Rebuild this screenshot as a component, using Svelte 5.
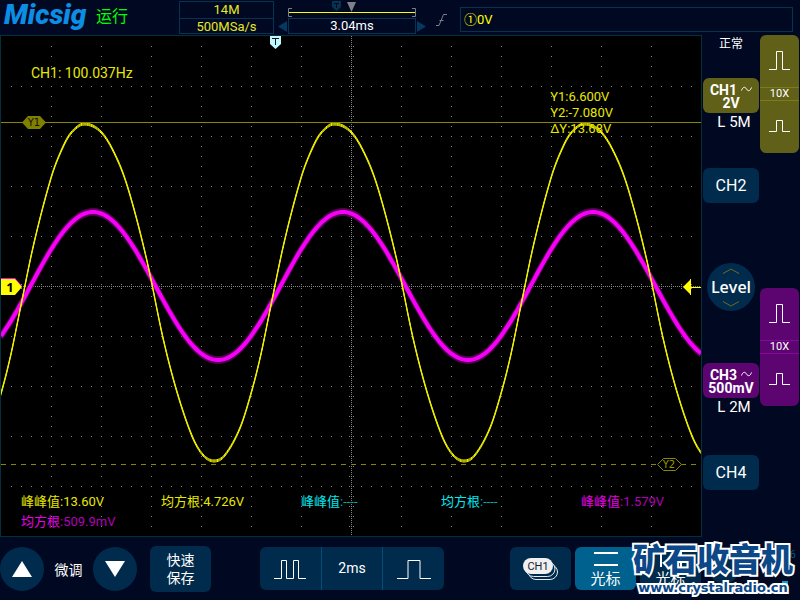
<script>
  const W = 700;
  const H = 500;
  const PERIOD = 250;

  // one period of CH1, in plot units
  const ch1Period = [
    [19, 274], [33, 207], [50, 142], [61, 113], [70, 97], [83, 88],
    [101, 97], [117, 125], [129, 159], [146, 225], [162, 302],
    [176, 356], [191, 400], [202, 419], [213, 425], [224, 419], [239, 392],
    [251, 354], [260, 318]
  ];

  const columns = Array.from({ length: 13 }, (_, i) => (i + 1) * 50 + 0.5);
  const rows = Array.from({ length: 9 }, (_, i) => (i + 1) * 50 + 0.5);

  const measurements = [
    { label: '峰峰值', value: '13.60V', source: 'ch1' },
    { label: '均方根', value: '4.726V', source: 'ch1' },
    { label: '峰峰值', value: '----', source: 'ch2' },
    { label: '均方根', value: '----', source: 'ch2' },
    { label: '峰峰值', value: '1.579V', source: 'ch3' },
    { label: '均方根', value: '509.9mV', source: 'ch3' }
  ];

  const probes = [
    { id: 'ch1', ratio: '10X' },
    { id: 'ch3', ratio: '10X' }
  ];

  function smooth(points) {
    const slope = (i) => (points[i + 1][1] - points[i - 1][1]) / (points[i + 1][0] - points[i - 1][0]);
    let d = `M${points[1]}`;
    for (let i = 1; i < points.length - 2; i++) {
      const [x1, y1] = points[i];
      const [x2, y2] = points[i + 1];
      const step = (x2 - x1) / 3;
      d += `C${x1 + step} ${y1 + step * slope(i)} ${x2 - step} ${y2 - step * slope(i + 1)} ${x2} ${y2}`;
    }
    return d;
  }

  function sine(amplitude, offset, phase) {
    let d = '';
    for (let x = 0; x <= W; x += 2) {
      const y = offset - amplitude * Math.sin((2 * Math.PI * (x - phase)) / PERIOD);
      d += `${x ? 'L' : 'M'}${x} ${y.toFixed(2)}`;
    }
    return d;
  }

  const ch1Path = smooth([-1, 0, 1, 2].flatMap((n) => ch1Period.map(([x, y]) => [x + n * PERIOD, y])));
  const ch3Path = sine(74, 250, 29.5);
</script>

<div class="scope">
  <header class="topbar">
    <div class="brand">Micsig</div>
    <div class="state">运行</div>
    <div class="sampling">
      <div>14M</div>
      <div>500MSa/s</div>
    </div>
    <div class="position">
      <svg class="memory" viewBox="0 0 128 17" aria-hidden="true">
        <path d="M44 0h9v6l-4.500 4L44 6z" fill="#043450" />
        <path d="M46 2.500h5M48.500 2v5" stroke="#000822" fill="none" />
        <path d="M59 1h9l-4.500 10z" fill="#808088" />
        <path d="M1 11.500h126" stroke="#ff0" />
        <path d="M4 7.500H.5v8H4M124 7.500h3.500v8H124" stroke="#777f88" fill="none" />
      </svg>
      <div class="time">
        <button aria-label="earlier"><svg viewBox="0 0 9 11"><path d="M9 0v11L0 5.500z" /></svg></button>
        <span>3.04ms</span>
        <button aria-label="later"><svg viewBox="0 0 9 11"><path d="M0 0v11l9-5.500z" /></svg></button>
      </div>
    </div>
    <svg class="slope" viewBox="0 0 11 14" aria-hidden="true">
      <path d="M0 12.500h3L7.500 1.500H11M3.500 7.500h4" />
    </svg>
    <div class="trigger">①0V</div>
  </header>

  <div class="middle">
    <main class="plot">
      <svg viewBox="0 0 {W} {H}">
        <g class="grid">
          {#each columns as x}
            <path d="M{x} 10V{H}" stroke-dasharray="1 9" />
          {/each}
          {#each rows as y}
            <path d="M10 {y}H{W}" stroke-dasharray="1 9" />
          {/each}
          <path d="M0 250.500H{W}M350.500 0V{H}" stroke-dasharray="1 1" />
          <path d="M348.500 10V{H}M352.500 10V{H}M10 248.500H{W}M10 252.500H{W}" stroke-dasharray="1 9" />
        </g>

        <g class="trace ch3">
          <path class="halo" d={ch3Path} transform="translate(0 -2)" />
          <path class="halo" d={ch3Path} transform="translate(0 2)" />
          <path d={ch3Path} />
        </g>
        <g class="trace ch1">
          <path d={ch1Path} />
          <path d={ch1Path} transform="translate(0 -1)" />
          <path d={ch1Path} transform="translate(0 1)" />
        </g>

        <path d="M0 86.500H{W}" stroke="#888800" />
        <path d="M21 86.500l6-6.500h12l6 6.500-6 6.500H27z" fill="#808000" />
        <text class="tag" x="33" y="90" fill="#111100">Y1</text>

        <path d="M0 428.500H656M680 428.500H{W}" stroke="#888800" stroke-dasharray="5 5" />
        <path d="M656.500 428.500l6-6h12l6 6-6 6h-12z" fill="#000" stroke="#888800" />
        <text class="tag" x="668" y="432" fill="#999900">Y2</text>

        <path d="M0 242h14l7 8-7 8H0z" fill="#f0f" />
        <path d="M0 243h14l7 8-7 8H0z" fill="#ff0" />
        <text class="zero" x="9" y="256">1</text>

        <path d="M682 251l7-7v14z" fill="#ff0" />
        <path d="M689.500 243v16M689 251.500H{W}" stroke="#ff0" />

        <path d="M269 0h11v8l-5.500 5-5.500-5z" fill="#c0f8ff" />
        <path d="M271 2.500h7M274.500 2v7" stroke="#001818" />
      </svg>

      <div class="counter">CH1: 100.037Hz</div>
      <div class="cursors">
        <div>Y1:6.600V</div>
        <div>Y2:-7.080V</div>
        <div>ΔY:13.68V</div>
      </div>
      <div class="measurements">
        {#each measurements as m}
          <div class={m.source}>{m.label}<span>:{m.value}</span></div>
        {/each}
      </div>
    </main>

    <aside class="side">
      <div class="channels">
        <div class="mode">正常</div>
        <button class="channel on ch1">
          <span>CH1 <svg viewBox="0 0 11 6"><path d="M.5 4.500C2 .5 4 .5 5.500 3s3.500 2.500 5-1.500" /></svg></span>
          <span>2V</span>
        </button>
        <div class="limit">L 5M</div>
        <button class="channel ch2">CH2</button>
        <button class="level">
          <svg viewBox="0 0 18 6"><path d="M1 5.500l8-4.500 8 4.500" /></svg>
          Level
          <svg viewBox="0 0 18 6"><path d="M1 .5L9 5l8-4.500" /></svg>
        </button>
        <button class="channel on ch3">
          <span>CH3 <svg viewBox="0 0 11 6"><path d="M.5 4.500C2 .5 4 .5 5.500 3s3.500 2.500 5-1.500" /></svg></span>
          <span>500mV</span>
        </button>
        <div class="limit">L 2M</div>
        <button class="channel ch4">CH4</button>
      </div>
      <div class="probes">
        {#each probes as probe}
          <div class="probe {probe.id}">
            <button aria-label="scale up">
              <svg viewBox="0 0 21 20"><path d="M0 18.500h7.500V.5h6v18H21" /></svg>
            </button>
            <div class="ratio">{probe.ratio}</div>
            <button aria-label="scale down">
              <svg viewBox="0 0 21 20"><path d="M0 14.500h7.500v-11h6v11H21" /></svg>
            </button>
          </div>
        {/each}
      </div>
    </aside>
  </div>

  <footer class="bottombar">
    <button class="round" aria-label="up"><svg viewBox="0 0 20 16"><path d="M10 0l10 16H0z" /></svg></button>
    <span class="fine">微调</span>
    <button class="round" aria-label="down"><svg viewBox="0 0 20 16"><path d="M0 0h20L10 16z" /></svg></button>
    <button class="save">快速<br />保存</button>
    <div class="timebase">
      <button aria-label="slower">
        <svg viewBox="0 0 34 20"><path d="M1 19.500h7.500v-18h5v18h7v-18h5v18H33" /></svg>
      </button>
      <span>2ms</span>
      <button aria-label="faster">
        <svg viewBox="0 0 34 20"><path d="M0 19.500h11v-18h12v18h11" /></svg>
      </button>
    </div>
    <button class="tile stack" aria-label="CH1">
      <svg viewBox="0 0 36 24">
        <rect x="5.500" y="7.500" width="29" height="15" rx="7.500" />
        <rect x="3" y="4.500" width="29" height="15" rx="7.500" />
        <rect class="top" x="0" y="1" width="30" height="16" rx="8" />
        <text x="15" y="13">CH1</text>
      </svg>
    </button>
    <button class="tile active">
      <svg viewBox="0 0 24 16"><path d="M0 2h24M0 14h24" /></svg>
      光标
    </button>
    <button class="tile">
      <svg viewBox="0 0 24 16"><path d="M2 0v16M22 0v16" /></svg>
      光标
    </button>
    <span class="dot"></span>
    <div class="status">
      <span>6</span>
      <i></i>
    </div>
    <div class="stamp">
      <strong>矿石收音机</strong>
      <span>www.crystalradio.cn</span>
    </div>
  </footer>
</div>

<style>
  :global(body) {
    background: #000822;
  }

  .scope {
    background: #000822;
    color: #fff;
    font-family: Roboto, "Noto Sans CJK SC", sans-serif;
    font-size: 14px;
    overflow: hidden;
  }

  button {
    margin: 0;
    padding: 0;
    border: 0;
    background: none;
    color: inherit;
    font: inherit;
    cursor: pointer;
  }

  svg {
    display: block;
  }

  .topbar {
    display: flex;
    height: 35px;
    box-sizing: border-box;
    padding: 1px 7px 1px 4px;
  }

  .brand {
    width: 92px;
    color: #0c8ee4;
    font-size: 28px;
    font-style: italic;
    font-weight: 900;
    line-height: 28px;
  }

  .state {
    width: 83px;
    color: #0f0;
    font-size: 16px;
    line-height: 32px;
  }

  .sampling {
    width: 93px;
    border: 1px solid #043450;
    color: #e8e820;
    font-size: 13px;
    line-height: 16px;
    text-align: center;
  }

  .sampling div + div {
    border-top: 1px solid #043450;
    line-height: 15px;
  }

  .position {
    width: 148px;
    margin-left: 4px;
  }

  .memory {
    width: 128px;
    height: 17px;
    margin: 0 auto;
  }

  .time {
    display: flex;
    align-items: center;
    justify-content: space-between;
  }

  .time span {
    width: 126px;
    border: 1px solid #043450;
    font-size: 13px;
    line-height: 14px;
    text-align: center;
  }

  .time svg {
    width: 9px;
    height: 11px;
    fill: #043a60;
  }

  .slope {
    width: 11px;
    height: 14px;
    margin: 12px 13px 0 10px;
    fill: none;
    stroke: #777f88;
  }

  .trigger {
    flex: 1;
    height: 23px;
    margin-top: 6px;
    padding-left: 3px;
    border: 1px solid #043450;
    color: #ff0;
    font-size: 13px;
    line-height: 23px;
  }

  .middle {
    display: flex;
  }

  .plot {
    position: relative;
    flex: 1;
    min-width: 0;
    border: 1px solid #03303f;
    background: #000;
  }

  .grid {
    stroke: #858585;
    shape-rendering: crispEdges;
  }

  .trace {
    fill: none;
  }

  .trace.ch3 {
    stroke: #f800f8;
    stroke-width: 4;
  }

  .trace .halo {
    stroke: #500050;
    stroke-width: 4;
  }

  .trace.ch1 {
    stroke: #f0f000;
    stroke-width: 1;
  }

  .tag {
    font: 10px "DejaVu Sans", sans-serif;
    text-anchor: middle;
  }

  .zero {
    font: bold 13px "Open Sans", sans-serif;
    text-anchor: middle;
  }

  .counter,
  .cursors,
  .measurements {
    position: absolute;
    color: #e8e800;
  }

  .counter {
    top: 29px;
    left: 30px;
    line-height: 16px;
  }

  .cursors {
    top: 53px;
    right: 88px;
    font-size: 13px;
    line-height: 16px;
  }

  .measurements {
    bottom: 4px;
    left: 0;
    display: grid;
    grid-template-columns: repeat(5, 1fr);
    width: 100%;
    font-size: 13px;
    line-height: 20px;
  }

  .measurements div {
    padding-left: 20px;
  }

  .measurements span {
    font-size: 13px;
  }

  .measurements .ch2 {
    color: #00e8f0;
  }

  .measurements .ch2 span {
    color: #00a8b0;
  }

  .measurements .ch3 {
    color: #e800e8;
  }

  .measurements .ch3 span {
    color: #b000b8;
  }

  .side {
    display: flex;
    gap: 1px;
    padding: 0 1px;
  }

  .channels {
    display: flex;
    flex-direction: column;
    align-items: center;
    width: 56px;
  }

  .mode {
    height: 43px;
    font-size: 12px;
    line-height: 18px;
  }

  .channel {
    width: 100%;
    height: 35px;
    border-radius: 6px;
    background: #002b4c;
    font-size: 16px;
  }

  .channel.on {
    padding-top: 2px;
    font-weight: 700;
    font-size: 14px;
    line-height: 13px;
  }

  .channel.on span {
    display: flex;
    justify-content: center;
    gap: 4px;
  }

  .channel svg {
    width: 11px;
    height: 6px;
    margin-top: 2px;
    fill: none;
    stroke: #fff;
  }

  .channel.ch1,
  .probe.ch1 {
    background: #606018;
  }

  .channel.ch3,
  .probe.ch3 {
    background: #5c0470;
  }

  .limit {
    padding-left: 6px;
    font-size: 15px;
    line-height: 18px;
  }

  .channel.ch2 {
    margin: 37px 0 60px;
  }

  .level {
    display: flex;
    flex-direction: column;
    align-items: center;
    justify-content: center;
    width: 48px;
    height: 48px;
    margin-bottom: 52px;
    border-radius: 50%;
    background: #002b4c;
    font-family: "Open Sans", sans-serif;
    font-size: 16px;
    font-weight: 600;
    line-height: 27px;
  }

  .level svg {
    width: 18px;
    height: 6px;
    fill: none;
    stroke: #6c6c20;
  }

  .channel.ch4 {
    margin-top: 39px;
  }

  .probes {
    display: flex;
    flex-direction: column;
    gap: 135px;
    width: 39px;
  }

  .probe {
    border-radius: 6px;
    text-align: center;
  }

  .probe button {
    display: block;
    width: 100%;
    height: 52px;
  }

  .probe button svg {
    width: 21px;
    height: 20px;
    margin: 0 auto;
    fill: none;
    stroke: #fff;
  }

  .ratio {
    border: solid #7c7c18;
    border-width: 1px 0;
    font-size: 11px;
    line-height: 12px;
  }

  .ch3 .ratio {
    border-color: #84089c;
  }

  .bottombar {
    position: relative;
    display: flex;
    align-items: center;
    height: 63px;
    padding-right: 4px;
  }

  .round {
    display: flex;
    align-items: center;
    justify-content: center;
    width: 44px;
    height: 44px;
    border-radius: 50%;
    background: #002b4c;
  }

  .round svg {
    width: 20px;
    height: 16px;
    fill: #fff;
  }

  .fine {
    width: 49px;
    text-align: center;
  }

  .save {
    width: 61px;
    height: 46px;
    margin: 0 49px 0 13px;
    border-radius: 6px;
    background: #002b4c;
    line-height: 18px;
  }

  .timebase {
    display: flex;
    align-items: center;
    width: 184px;
    height: 43px;
    margin-right: 66px;
    border-radius: 6px;
    background: #002b4c;
    line-height: 43px;
    text-align: center;
  }

  .timebase > * {
    flex: 1;
    height: 43px;
  }

  .timebase span {
    border: solid #064c78;
    border-width: 0 1px;
  }

  .timebase svg {
    width: 34px;
    height: 20px;
    margin: 0 auto;
    fill: none;
    stroke: #fff;
  }

  .tile {
    width: 61px;
    height: 43px;
    margin-right: 4px;
    border-radius: 6px;
    background: #002b4c;
    font-size: 15px;
    line-height: 17px;
  }

  .tile.active {
    background: #00608e;
  }

  .tile svg {
    width: 24px;
    height: 16px;
    margin: 2px auto 4px;
    fill: none;
    stroke: #fff;
    stroke-width: 2;
  }

  .tile.stack svg {
    width: 36px;
    height: 24px;
    margin: 0 auto;
  }

  .tile.stack rect {
    fill: #002b4c;
    stroke: #e8eef4;
    stroke-width: 1;
  }

  .tile.stack .top {
    fill: #f0f0f0;
    stroke: none;
  }

  .stack text {
    fill: #102030;
    stroke: none;
    font-size: 11px;
    text-anchor: middle;
  }

  .dot {
    width: 30px;
    height: 30px;
    margin-left: 4px;
    border-radius: 50%;
    background: #002b4c;
  }

  .status {
    display: flex;
    flex-direction: column;
    align-items: flex-end;
    gap: 20px;
    margin-left: auto;
    color: #045880;
    font-size: 11px;
    line-height: 12px;
  }

  .status i {
    width: 6px;
    height: 8px;
    margin-right: 8px;
    background: #08a0c8;
  }

  .stamp {
    position: absolute;
    right: 7px;
    bottom: 4px;
    display: flex;
    flex-direction: column;
    gap: 6px;
    align-items: center;
    color: #0c4888;
    white-space: nowrap;
    paint-order: stroke fill;
    -webkit-text-stroke: 4px #fff;
    pointer-events: none;
  }

  .stamp strong {
    font-family: "Noto Sans CJK SC", sans-serif;
    font-size: 32px;
    font-weight: 900;
    line-height: 34px;
  }

  .stamp span {
    font-family: "DejaVu Sans", sans-serif;
    font-size: 13px;
    font-weight: 700;
    line-height: 16px;
  }
</style>
